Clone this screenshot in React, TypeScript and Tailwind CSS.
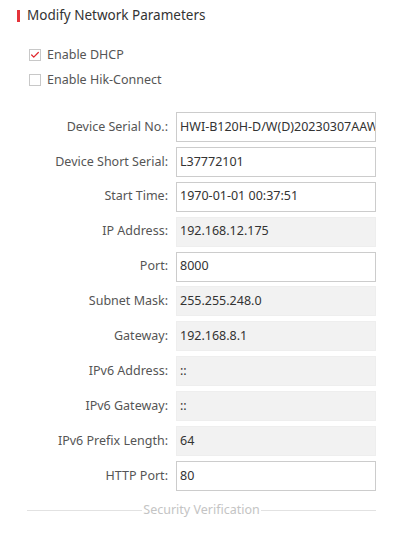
import { Check } from 'lucide-react';

const fields: { label: string; value: string; disabled?: boolean }[] = [
  { label: 'Device Serial No.:', value: 'HWI-B120H-D/W(D)20230307AAWRL37772101' },
  { label: 'Device Short Serial:', value: 'L37772101' },
  { label: 'Start Time:', value: '1970-01-01 00:37:51' },
  { label: 'IP Address:', value: '192.168.12.175', disabled: true },
  { label: 'Port:', value: '8000' },
  { label: 'Subnet Mask:', value: '255.255.248.0', disabled: true },
  { label: 'Gateway:', value: '192.168.8.1', disabled: true },
  { label: 'IPv6 Address:', value: '::', disabled: true },
  { label: 'IPv6 Gateway:', value: '::', disabled: true },
  { label: 'IPv6 Prefix Length:', value: '64', disabled: true },
  { label: 'HTTP Port:', value: '80' },
];

export default function App() {
  return (
    <div className="w-[399px] h-[533px] overflow-hidden bg-white font-['Noto_Sans',sans-serif] text-[12.5px] text-[#555]">
      <div className="flex items-center h-[31px] pl-[17px]">
        <span className="w-[3px] h-[12px] bg-[#e5343b]" />
        <span className="ml-[7px] text-[13.5px] text-[#333]">Modify Network Parameters</span>
      </div>

      <div className="pl-[29px] pt-[17px] flex flex-col gap-[11px]">
        <label className="flex items-center gap-[6px] h-[14px]">
          <span className="w-[12px] h-[12px] border border-[#c8c8c8] flex items-center justify-center">
            <Check className="w-[10px] h-[10px] text-[#e0282e]" strokeWidth={3} />
          </span>
          <span>Enable DHCP</span>
        </label>
        <label className="flex items-center gap-[6px] h-[14px]">
          <span className="w-[12px] h-[12px] border border-[#c8c8c8]" />
          <span>Enable Hik-Connect</span>
        </label>
      </div>

      <div className="mt-[25px] flex flex-col gap-[4.9px]">
        {fields.map((f) => (
          <div key={f.label} className="flex items-center">
            <div className="w-[168px] text-right">{f.label}</div>
            <div
              className={`ml-[8px] w-[200px] h-[30px] border flex items-center pl-[3px] overflow-hidden whitespace-nowrap text-[#333] ${
                f.disabled ? 'bg-[#f2f2f2] border-[#eeeeee]' : 'bg-white border-[#cccccc]'
              }`}
            >
              {f.value}
            </div>
          </div>
        ))}
      </div>

      <div className="mt-[10px] ml-[27px] w-[349px] flex items-center">
        <div className="flex-1 h-px bg-[#e2e2e2]" />
        <span className="text-[#c4c4c4] px-[1px]">Security Verification</span>
        <div className="flex-1 h-px bg-[#e2e2e2]" />
      </div>
    </div>
  );
}
